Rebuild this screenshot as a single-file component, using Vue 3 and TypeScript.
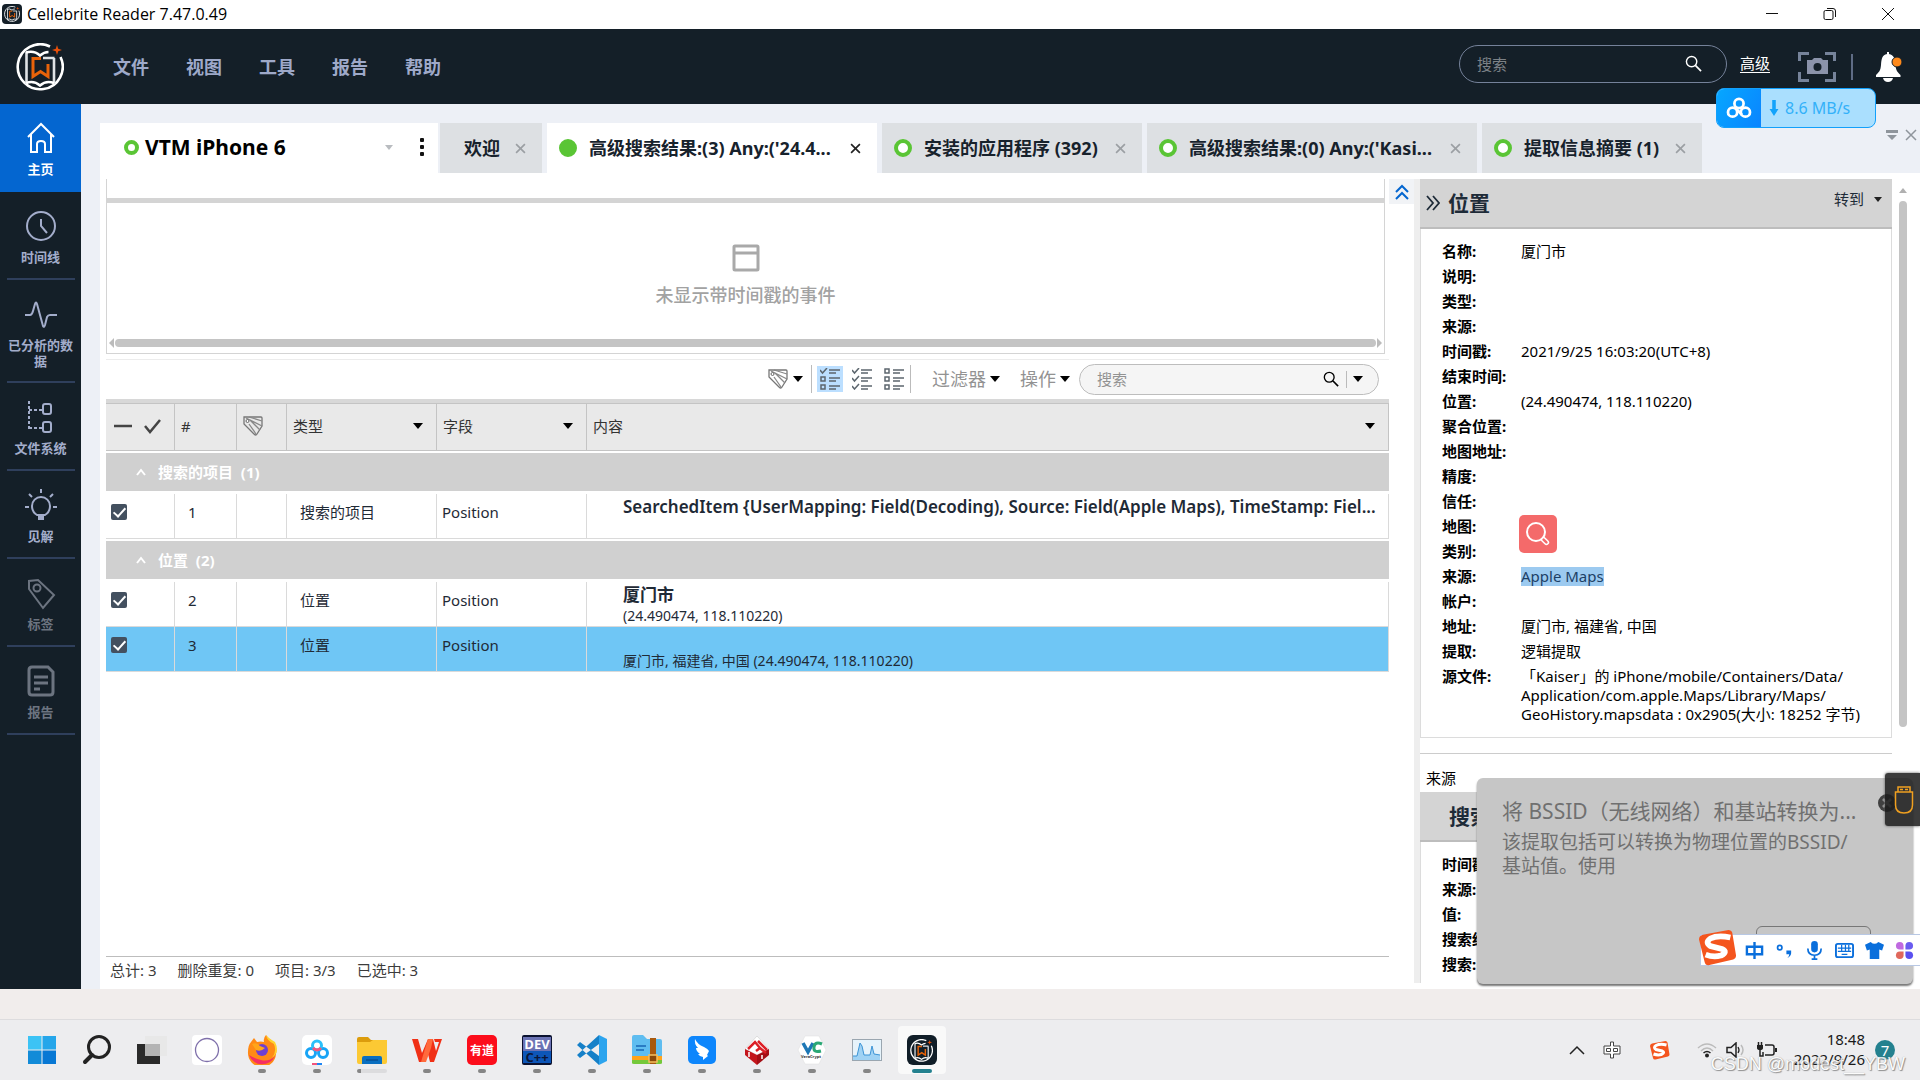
<script setup lang="ts">
import { ref } from 'vue'

interface NavItem { id: string; label: string; dim?: boolean; active?: boolean }
interface Tab { title: string; dot: 'none' | 'full' | 'ring'; active?: boolean; size: string }
interface Row { n: number; type: string; field: string; title: string; sub: string; selected?: boolean; checked: boolean }
interface Group { name: string; count: number; rows: Row[] }
interface Field { label: string; value?: string; kind?: 'map' | 'mark' | 'file' }

const menus = ['文件', '视图', '工具', '报告', '帮助']

const nav: NavItem[] = [
  { id: 'home', label: '主页', active: true },
  { id: 'time', label: '时间线' },
  { id: 'data', label: '已分析的数据' },
  { id: 'files', label: '文件系统' },
  { id: 'idea', label: '见解' },
  { id: 'tag', label: '标签', dim: true },
  { id: 'report', label: '报告', dim: true },
]

const tabs: Tab[] = [
  { title: '欢迎', dot: 'none', size: 'w-welcome' },
  { title: "高级搜索结果:(3) Any:('24.4...", dot: 'full', active: true, size: 'w-search' },
  { title: '安装的应用程序 (392)', dot: 'ring', size: 'w-apps' },
  { title: "高级搜索结果:(0) Any:('Kasi...", dot: 'ring', size: 'w-search' },
  { title: '提取信息摘要 (1)', dot: 'ring', size: 'w-summary' },
]

const groups = ref<Group[]>([
  {
    name: '搜索的项目', count: 1, rows: [
      { n: 1, type: '搜索的项目', field: 'Position', title: 'SearchedItem {UserMapping: Field(Decoding), Source: Field(Apple Maps), TimeStamp: Fiel...', sub: '', checked: true },
    ],
  },
  {
    name: '位置', count: 2, rows: [
      { n: 2, type: '位置', field: 'Position', title: '厦门市', sub: '(24.490474, 118.110220)', checked: true },
      { n: 3, type: '位置', field: 'Position', title: '', sub: '厦门市, 福建省, 中国 (24.490474, 118.110220)', selected: true, checked: true },
    ],
  },
])

const fields: Field[] = [
  { label: '名称', value: '厦门市' },
  { label: '说明' },
  { label: '类型' },
  { label: '来源' },
  { label: '时间戳', value: '2021/9/25 16:03:20(UTC+8)' },
  { label: '结束时间' },
  { label: '位置', value: '(24.490474, 118.110220)' },
  { label: '聚合位置' },
  { label: '地图地址' },
  { label: '精度' },
  { label: '信任' },
  { label: '地图', kind: 'map' },
  { label: '类别' },
  { label: '来源', value: 'Apple Maps', kind: 'mark' },
  { label: '帐户' },
  { label: '地址', value: '厦门市, 福建省, 中国' },
  { label: '提取', value: '逻辑提取' },
  { label: '源文件', value: '「Kaiser」的 iPhone/mobile/Containers/Data/\nApplication/com.apple.Maps/Library/Maps/\nGeoHistory.mapsdata : 0x2905(大小: 18252 字节)', kind: 'file' },
]

const sourceFields = ['时间戳', '来源', '值', '搜索结果', '搜索']

const stats = ['总计: 3', '删除重复: 0', '项目: 3/3', '已选中: 3']

const apps = [
  { id: 'start', run: '' }, { id: 'search', run: '' }, { id: 'tasks', run: '' }, { id: 'ring', run: '' },
  { id: 'firefox', run: 'dot' }, { id: 'netdisk', run: 'dot' }, { id: 'folder', run: 'bar' }, { id: 'wps', run: 'dot' },
  { id: 'youdao', run: 'dot' }, { id: 'dev', run: 'dot' }, { id: 'vscode', run: 'dot' }, { id: 'zip', run: 'dot' },
  { id: 'wing', run: 'dot' }, { id: 'cube', run: 'dot' }, { id: 'vera', run: 'dot' }, { id: 'monitor', run: 'dot' },
  { id: 'reader', run: 'on' },
]
</script>

<template>
  <div class="desktop">
    <svg class="defs" aria-hidden="true">
      <symbol id="logo" viewBox="0 0 48 48">
        <path d="M34 3.500A22.500 22.500 0 1 0 44.500 14" fill="none" stroke="#fff" stroke-width="2.600" />
        <path d="M10.500 9v32M38 15v26M27 15h11.500" fill="none" stroke="#dfe3e6" stroke-width="2.600" />
        <path d="M10 9.500q8-2.500 14 3q4-3.500 8.500-3.500M10 40q8-3 14 2.500q6-5.500 14-2.500" fill="none" stroke="#fff" stroke-width="2.600" />
        <path d="M25 15.500h-8v18l7.500-5l7.500 5V21" fill="none" stroke="#e8630a" stroke-width="3" />
        <path d="M41 2l1.200 3.800L46 7l-3.800 1.200L41 12l-1.200-3.800L36 7l3.800-1.200z" fill="#e8500a" />
      </symbol>
      <symbol id="glass" viewBox="0 0 18 18">
        <circle cx="7" cy="7" r="5.500" fill="none" stroke="currentColor" stroke-width="1.500" />
        <path d="M11 11l6 6" stroke="currentColor" stroke-width="1.800" />
      </symbol>
      <symbol id="tags" viewBox="0 0 20 20">
        <path d="M1 1h17q1 0 1 1v8l-5 8q-1 2-3 0L1 8z" fill="none" stroke="#777" stroke-width="1.300" />
        <path d="M3 2l16 8M6 1l13 4M7 4l10 10M6 8l7 10" fill="none" stroke="#888" stroke-width="1.300" />
        <circle cx="4.500" cy="5" r="1.500" fill="#fff" stroke="#666" />
      </symbol>
      <symbol id="cloud3" viewBox="0 0 28 24">
        <g fill="none" stroke="currentColor" stroke-width="3">
          <circle cx="14" cy="7" r="5" /><circle cx="7" cy="16.500" r="5" /><circle cx="21" cy="16.500" r="5" />
          <path d="M10 12l7 7" />
        </g>
      </symbol>
      <symbol id="sogou" viewBox="0 0 40 38">
        <path d="M4 5L31 0q3 0 4 3l4 24q0 3-3 4L11 37q-4 1-5-3L0 10q0-4 4-5z" fill="#f4551e" />
        <path d="M33 8q-13-3-21 1q-6 4 0 8l12 3q7 3-1 7q-8 2-16-1" fill="none" stroke="#fff" stroke-width="6" />
      </symbol>
      <symbol id="expand" viewBox="0 0 14 16">
        <path d="M1 1l6 7l-6 7M7 1l6 7l-6 7" fill="none" stroke="currentColor" stroke-width="1.800" />
      </symbol>
    </svg>

    <header class="titlebar">
      <span class="tile small"><svg><use href="#logo" /></svg></span>
      <span class="title">Cellebrite Reader 7.47.0.49</span>
      <div class="window-buttons">
        <button aria-label="最小化"><svg viewBox="0 0 14 14"><path d="M1 6.500h12" /></svg></button>
        <button aria-label="还原"><svg viewBox="0 0 14 14"><rect x="1" y="3.500" width="9" height="9" rx="1.500" /><path d="M4 1.500h6q2.500 0 2.500 2.500v6" /></svg></button>
        <button aria-label="关闭"><svg viewBox="0 0 14 14"><path d="M1 1l12 12M13 1L1 13" /></svg></button>
      </div>
    </header>

    <div class="menubar">
      <svg class="brand"><use href="#logo" /></svg>
      <nav class="menus"><button v-for="m in menus" :key="m">{{ m }}</button></nav>
      <div class="top-search">
        <input type="text" placeholder="搜索" aria-label="搜索" />
        <svg><use href="#glass" /></svg>
      </div>
      <a class="advanced" href="#">高级</a>
      <button class="shot" aria-label="屏幕截图">
        <svg viewBox="0 0 38 30">
          <path d="M1.500 9V1.500H11M27 1.500h9.500V9M36.500 20v8.500H27M11 28.500H1.500V20" fill="none" stroke="#76839a" stroke-width="3" />
          <path d="M9 8h5l2-2h7l2 2h5v14H9z" fill="#8b93aa" /><circle cx="19.500" cy="15" r="4" fill="#141f28" />
        </svg>
      </button>
      <span class="divider"></span>
      <button class="bell" aria-label="通知">
        <svg viewBox="0 0 28 30">
          <path d="M13 0v4" stroke="#fff" stroke-width="2" />
          <path d="M13 2c6 0 7 5 7.500 11c.5 6 2 7 5 10v2H1v-2c3-3 4.500-4 5-10C6.500 7 7 2 13 2z" fill="#fff" />
          <path d="M8 26h10q-1 4-5 4t-5-4z" fill="#fff" /><circle cx="22" cy="10" r="5" fill="#ff8a1c" stroke="#141f28" />
        </svg>
      </button>
    </div>

    <main class="workspace">
      <nav class="sidebar">
        <button v-for="item in nav" :key="item.id" :class="{ active: item.active, dim: item.dim }">
          <svg viewBox="0 0 34 34">
            <path v-if="item.id === 'home'" d="M4 16L17 3l13 13M7 13v18h6v-8q0-3 4-3t4 3v8h6V13" />
            <template v-else-if="item.id === 'time'"><circle cx="17" cy="17" r="14" /><path d="M17 10v7l6 7" /></template>
            <path v-else-if="item.id === 'data'" d="M1 18h5q2 0 3-4l2-7q1-3 2 0l6 22q1 2 2-1l2-8q1-2 3-2h7" />
            <g v-else-if="item.id === 'files'"><path d="M5 1v28M5 10h14M5 28h14" stroke-dasharray="3 2" /><rect x="19" y="4" width="8" height="10" rx="2" /><rect x="19" y="22" width="8" height="10" rx="2" /></g>
            <g v-else-if="item.id === 'idea'"><path d="M13 27q-5-3-5-9a9 9 0 0 1 18 0q0 6-5 9zM17 1v4M5 6l3 3M29 6l-3 3M1 19h4M29 19h4" /><path d="M14 30h6" stroke-width="4" /></g>
            <g v-else-if="item.id === 'tag'"><path d="M5 13V5l9-1L30 19L19 32z" /><circle cx="13" cy="12" r="3.500" /></g>
            <g v-else><path d="M5 6q0-3 3-3h16l5 5v20q0 3-3 3H8q-3 0-3-3zM10 13h14M10 19h14M10 25h6" stroke-width="3" /></g>
          </svg>
          <span>{{ item.label }}</span>
        </button>
      </nav>

      <section class="content">
        <div class="tabs">
          <div class="device">
            <i class="ring thick"></i><strong>VTM iPhone 6</strong>
            <i class="arrow pale"></i>
            <button class="dots" aria-label="更多"><i></i><i></i><i></i></button>
          </div>
          <div v-for="(t, i) in tabs" :key="i" class="tab" :class="[t.size, { active: t.active }]">
            <i v-if="t.dot !== 'none'" :class="t.dot"></i>
            <span>{{ t.title }}</span>
            <button aria-label="关闭标签页"><svg viewBox="0 0 10 10"><path d="M1 1l8 8M9 1L1 9" /></svg></button>
          </div>
          <div class="tab-tools">
            <button aria-label="标签页列表"><svg viewBox="0 0 12 12"><path d="M0 1h12v3H0zM1 6h10l-5 5z" fill="#8f959c" /></svg></button>
            <button aria-label="全部关闭"><svg viewBox="0 0 12 12"><path d="M1 1l10 10M11 1L1 11" stroke="#8f959c" stroke-width="1.500" /></svg></button>
          </div>
        </div>

        <div class="panes">
          <section class="results">
            <div class="timeline">
              <div class="bar"></div>
              <div class="empty">
                <svg viewBox="0 0 28 28"><rect x="2" y="2" width="24" height="24" rx="1" /><path d="M2 9h24" /></svg>
                <p>未显示带时间戳的事件</p>
              </div>
              <div class="hscroll"><b></b><span></span><b class="r"></b></div>
            </div>

            <div class="toolbar">
              <button class="tagger" aria-label="标签"><svg><use href="#tags" /></svg><i class="arrow"></i></button>
              <span class="sep"></span>
              <button v-for="k in 3" :key="k" class="mode" :class="{ on: k === 1 }" aria-label="选择模式">
                <svg viewBox="0 0 20 22">
                  <path d="M9 2h11M9 5h7M9 10h11M9 13h7M9 18h11M9 21h7" />
                  <g v-for="r in 3" :key="r" :transform="`translate(0 ${(r - 1) * 8})`">
                    <path v-if="k === 2 || (k === 1 && r === 1)" d="M0 2l2.500 3L7 0" />
                    <rect v-else x="1" y="1" width="4" height="4" />
                  </g>
                </svg>
              </button>
              <span class="sep"></span>
              <button class="drop">过滤器<i class="arrow"></i></button>
              <button class="drop">操作<i class="arrow"></i></button>
              <div class="table-search">
                <input type="text" placeholder="搜索" aria-label="在结果中搜索" />
                <svg><use href="#glass" /></svg><span></span><i class="arrow"></i>
              </div>
            </div>

            <table>
              <colgroup><col class="c1" /><col class="c2" /><col class="c3" /><col class="c4" /><col class="c4" /><col /></colgroup>
              <thead>
                <tr>
                  <th><svg class="marks" viewBox="0 0 50 20"><path d="M2 10h18" /><path d="M33 10l5 6L48 4" /></svg></th>
                  <th>#</th>
                  <th><svg class="tag-icon"><use href="#tags" /></svg></th>
                  <th><div>类型<i class="arrow"></i></div></th>
                  <th><div>字段<i class="arrow"></i></div></th>
                  <th><div>内容<i class="arrow last"></i></div></th>
                </tr>
              </thead>
              <tbody v-for="g in groups" :key="g.name">
                <tr class="group">
                  <td colspan="6"><div><svg viewBox="0 0 10 8"><path d="M1 7l4-5l4 5" /></svg>{{ g.name }}&nbsp; ({{ g.count }})</div></td>
                </tr>
                <tr v-for="r in g.rows" :key="r.n" class="row" :class="{ selected: r.selected }">
                  <td><input v-model="r.checked" type="checkbox" :aria-label="`选择 ${r.n}`" /></td>
                  <td>{{ r.n }}</td>
                  <td></td>
                  <td>{{ r.type }}</td>
                  <td>{{ r.field }}</td>
                  <td><p class="head">{{ r.title }}</p><p class="sub">{{ r.sub }}</p></td>
                </tr>
              </tbody>
            </table>

            <footer class="status"><span v-for="s in stats" :key="s">{{ s }}</span></footer>
          </section>

          <div class="gutter">
            <button aria-label="折叠时间线"><svg viewBox="0 0 14 16"><path d="M1 8l6-6l6 6M1 15l6-6l6 6" /></svg></button>
            <div class="splitter"></div>
          </div>

          <aside class="details">
            <div class="cards">
              <section class="card">
                <header><svg class="expand"><use href="#expand" /></svg><h2>位置</h2><button>转到<i class="arrow"></i></button></header>
                <dl>
                  <div v-for="(f, i) in fields" :key="i">
                    <dt>{{ f.label }}:</dt>
                    <dd :class="f.kind">
                      <svg v-if="f.kind === 'map'" viewBox="0 0 38 38">
                        <rect width="38" height="38" rx="5" fill="#f46a6a" />
                        <circle cx="17" cy="17" r="9" fill="none" stroke="#fff" stroke-width="2" />
                        <rect x="22" y="24" width="8" height="4" rx="2" transform="rotate(45 26 26)" fill="#f46a6a" stroke="#fff" stroke-width="1.500" />
                      </svg>
                      <mark v-else-if="f.kind === 'mark'">{{ f.value }}</mark>
                      <template v-else>{{ f.value }}</template>
                    </dd>
                  </div>
                </dl>
              </section>
              <h3>来源</h3>
              <section class="card second">
                <header><h2>搜索的项目</h2></header>
                <dl><div v-for="s in sourceFields" :key="s"><dt>{{ s }}:</dt></div></dl>
              </section>
            </div>
            <div class="vscroll"><b></b><span></span></div>
          </aside>
        </div>
      </section>
    </main>

    <div class="band"></div>

    <footer class="taskbar">
      <button v-for="a in apps" :key="a.id" class="app" :class="{ current: a.run === 'on' }" :aria-label="a.id">
        <svg viewBox="0 0 30 30">
          <g v-if="a.id === 'start'"><path d="M1 1h13.500v13.500H1z" fill="#3cc3f5" /><path d="M15.500 1H29v13.500H15.500z" fill="#25a6ea" /><path d="M1 15.500h13.500V29H1z" fill="#128bd8" /><path d="M15.500 15.500H29V29H15.500z" fill="#0878d4" /></g>
          <g v-else-if="a.id === 'search'" fill="none" stroke="#222"><circle cx="17" cy="12" r="10.500" stroke-width="3" /><path d="M10 20l-7 7" stroke-width="4" stroke-linecap="round" /></g>
          <g v-else-if="a.id === 'tasks'"><path d="M0 9h23v20H0z" fill="#2a2a2a" /><path d="M8 1h22v20H8z" fill="#e6e6e6" fill-opacity=".8" /><path d="M8 9h15v12H8z" fill="#b4b4b4" /></g>
          <g v-else-if="a.id === 'ring'"><rect width="30" height="30" rx="4" fill="#fff" /><circle cx="15" cy="15" r="11.500" fill="none" stroke="#7f70ab" stroke-width="1.300" /></g>
          <g v-else-if="a.id === 'firefox'"><path d="M4 7l3-4l3 4q4-1 7 0q-1-4 2-7q2 3 6 6q6 6 4 13a14 14 0 0 1-28-2q0-7 3-10z" fill="#ff8a16" /><path d="M19 0q1 6 8 9q3 8-2 14q8-6 3-16q-7-4-9-7z" fill="#ffd42e" /><path d="M2 20a14 14 0 0 0 26 1q-6 6-14 4t-12-5z" fill="#f52f62" /><circle cx="15" cy="15" r="6" fill="#6f3fd0" /><path d="M5 9q5-2 8 2l5 2q-4 4-9 2z" fill="#ffa51a" /></g>
          <g v-else-if="a.id === 'netdisk'"><rect width="30" height="30" rx="5" fill="#fff" /><g fill="none" stroke-width="3"><circle cx="9" cy="18" r="4.500" stroke="#18a4f6" /><circle cx="21" cy="18" r="4.500" stroke="#18a4f6" /><circle cx="15" cy="10.500" r="4.500" stroke="#2bc0fa" /><path d="M11 13q4 4 8 0" stroke="#f2557c" /></g><path d="M10 28h5v2h-5z" fill="#f2557c" /><path d="M15 28h5v2h-5z" fill="#1d86f5" /></g>
          <g v-else-if="a.id === 'folder'"><path d="M0 4q0-2 2-2h9l3 3h16v8H0z" fill="#dc9c0c" /><path d="M0 7h13l3-2h14v22q0 2-2 2H2q-2 0-2-2z" fill="#fcc934" /><path d="M5 29v-6q0-2 2-2h16q2 0 2 2v6z" fill="#0a6fc0" /><path d="M9 25h12" stroke="#06407c" /></g>
          <g v-else-if="a.id === 'wps'"><path d="M0 4h6l4 14l6-14h5l3 12l3-9h-4l-1-3h8l-8 23h-4l-3-12l-5 12H7z" fill="#f03016" /><path d="M16 4h5l-2 9l-5 14H9z" fill="#ff6a3c" /></g>
          <g v-else-if="a.id === 'youdao'"><rect width="30" height="30" rx="5" fill="#fc0d1b" /><text x="15" y="20" class="g-yd">有道</text></g>
          <g v-else-if="a.id === 'dev'"><rect width="30" height="30" rx="2" fill="#0b1230" /><path d="M1 2h28v14H1z" fill="#6b73b4" /><path d="M1 16h28v12H1z" fill="#0d56b8" /><text x="15" y="14" class="g-dev">DEV</text><text x="15" y="27" class="g-cpp">C++</text></g>
          <g v-else-if="a.id === 'vscode'"><path d="M22 0l8 4v22l-8 4z" fill="#2ca4ee" /><path d="M22 0L0 20l3 3L22 9zM22 30L0 10l3-3l19 14z" fill="#1580c8" /></g>
          <g v-else-if="a.id === 'zip'"><path d="M0 2q0-2 2-2h9l4 4h13q2 0 2 2v20H0z" fill="#5fbdf0" /><path d="M0 21h30v4H0z" fill="#ffa41c" /><path d="M0 25h30v3q0 1-2 1H2q-2 0-2-1z" fill="#74c83a" /><path d="M4 11h10M4 15h8" stroke="#2a7cc4" stroke-width="2" /><path d="M18 3h6v26h-6z" fill="#a8590e" /><rect x="17" y="20" width="8" height="7" fill="#8a4808" stroke="#f4c060" stroke-width="1.500" /></g>
          <g v-else-if="a.id === 'wing'"><rect x="1" y="1" width="28" height="28" rx="5" fill="#0d86fc" /><path d="M8 4q2 5 9 8q4 2 5 4l-2 4l1 1l-5 4v-3q-3 0-5-3h2q-4-3-4-6h2q-4-4-3-9z" fill="#fff" /></g>
          <g v-else-if="a.id === 'cube'"><path d="M15 1l12 13l-12 6L3 14z" fill="#fff" stroke="#ddd" /><path d="M3 14l12 6v10L3 20z" fill="#c4161c" /><path d="M27 14l-12 6v10l12-10z" fill="#a40f16" /><path d="M6 14l7-7l5 6l-4 3M16 6l9 9M18 13l6 5" fill="none" stroke="#dc1f26" stroke-width="2.500" /><path d="M7 17v5M20 20v4" stroke="#fff" stroke-width="1.500" /></g>
          <g v-else-if="a.id === 'vera'"><path d="M8 1h14l7 14l-7 14H8L1 15z" fill="#fff" stroke="#ddd" stroke-width=".5" /><path d="M6 8l5 9l5-9" fill="none" stroke="#1d77b5" stroke-width="3.500" /><path d="M25 9q-7-3-8 3t7 4" fill="none" stroke="#2aa875" stroke-width="3" /><text x="14" y="23" class="g-vc">VeraCrypt</text></g>
          <g v-else-if="a.id === 'monitor'"><rect x=".5" y="4.500" width="29" height="21" fill="#e6f3fb" stroke="#9aa6b0" /><path d="M1 25v-4h4L8 8l2 3l2 9h6l2-9l2 8l6 1v5z" fill="#9fd2f4" /><path d="M1 21h4L8 8l2 3l2 9h6l2-9l2 8l6 1" fill="none" stroke="#3c94d6" /></g>
          <g v-else><rect width="30" height="30" rx="6" fill="#111e28" /><use href="#logo" x="3" y="4" width="23" height="23" /></g>
        </svg>
        <i v-if="a.run" :class="a.run"></i>
      </button>

      <div class="tray">
        <button aria-label="显示隐藏的图标"><svg class="chev" viewBox="0 0 16 10"><path d="M1 9l7-7l7 7" fill="none" stroke="#222" stroke-width="1.500" /></svg></button>
        <svg class="zh" viewBox="0 0 18 18"><path d="M7.500 1h3v4h6.500v8h-6.500v4h-3v-4H1V5h6.500zM3.500 7.500h4v3h-4zM10.500 7.500h4v3h-4z" fill="#fff" stroke="#444" /></svg>
        <svg class="so"><use href="#sogou" /></svg>
        <svg class="wifi" viewBox="0 0 20 16"><path d="M1 6q9-8 18 0M4 9q6-6 12 0" fill="none" stroke="#bbb" stroke-width="1.500" /><path d="M6.500 11q3.500-3 7 0" fill="none" stroke="#222" stroke-width="1.500" /><circle cx="10" cy="13.500" r="2" fill="#222" /></svg>
        <svg class="vol" viewBox="0 0 20 16"><path d="M1 5.500h4l5-4.500v14l-5-4.500H1z" fill="none" stroke="#222" stroke-width="1.500" /><path d="M12 5q2 3 0 6" fill="none" stroke="#222" stroke-width="1.300" /><path d="M15 3q4 5 0 10" fill="none" stroke="#bbb" stroke-width="1.500" /></svg>
        <svg class="batt" viewBox="0 0 20 16"><path d="M0 3h6v3q0 2-3 2T0 6z" fill="#222" /><path d="M1.500 0v3M4.500 0v3M3 8v6h3v-4" fill="none" stroke="#222" stroke-width="1.500" /><path d="M8 3h7q2 0 2 2v6q0 2-2 2H8" fill="none" stroke="#222" stroke-width="1.500" /><path d="M18 6h2v4h-2z" fill="#222" /></svg>
        <time>18:48<br />2022/9/26</time>
        <span class="count">7</span>
      </div>
      <span class="watermark">CSDN @modest__YBW</span>
    </footer>

    <div class="speed">
      <span><svg><use href="#cloud3" /></svg></span>
      <svg class="down" viewBox="0 0 10 18"><path d="M3 0h4v10h3l-5 8l-5-8h3z" fill="#13a3fb" /></svg>8.6 MB/s
    </div>

    <section class="toast">
      <h4>将 BSSID（无线网络）和基站转换为...</h4>
      <p>该提取包括可以转换为物理位置的BSSID/<br />基站值。使用</p>
      <div class="toast-button"></div>
    </section>
    <button class="toast-close" aria-label="关闭通知"><svg viewBox="0 0 18 18"><circle cx="9" cy="9" r="9" fill="#404040" /><path d="M5 5l8 8M13 5l-8 8" stroke="#999" stroke-width="2.500" /></svg></button>
    <div class="usb"><svg viewBox="0 0 20 30"><path d="M4 7V2h12v5M1.500 7h17v13q0 8-8.500 8t-8.500-8zM6 4.500h3M11 4.500h3" fill="none" stroke="#f0a020" stroke-width="1.500" /></svg></div>

    <div class="ime">
      <svg class="s"><use href="#sogou" /></svg>
      <svg viewBox="0 0 20 20"><path d="M2 6h16v8H2zM10 1v18" fill="none" stroke="#0a6fdc" stroke-width="2.500" /></svg>
      <svg viewBox="0 0 20 20"><circle cx="5" cy="7" r="2.300" fill="none" stroke="#0a6fdc" stroke-width="1.800" /><path d="M12 10h5v3q0 3-4 5q2-2 2-4h-3z" fill="#0a6fdc" /></svg>
      <svg viewBox="0 0 20 20"><rect x="6.500" y="0" width="7" height="12" rx="3.500" fill="#0a6fdc" /><path d="M3 8q0 7 7 7t7-7M10 15v4M7 19h6" fill="none" stroke="#0a6fdc" stroke-width="1.800" /></svg>
      <svg viewBox="0 0 20 20"><rect x="1" y="3" width="18" height="14" rx="2" fill="none" stroke="#0a6fdc" stroke-width="2" /><path d="M3 7.500h14M3 11h14M7 14h6M7 4v7M11 4v7M14.500 4v7" stroke="#0a6fdc" stroke-width="1.300" /></svg>
      <svg viewBox="0 0 20 20"><path d="M0 4l6-3q4 4 8 0l6 3l-2 6l-3-1v10H5V9L2 10z" fill="#0a6fdc" /></svg>
      <svg viewBox="0 0 20 20"><path d="M1 5a4 4 0 0 1 8 0v4H5a4 4 0 0 1-4-4z" fill="#c06ae0" /><path d="M11 5a4 4 0 1 1 4 4h-4z" fill="#6a5cf0" /><path d="M1 15a4 4 0 0 1 4-4h4v4a4 4 0 0 1-8 0z" fill="#e0685c" /><path d="M11 11h4a4 4 0 1 1-4 4z" fill="#5a50f0" /></svg>
    </div>
  </div>
</template>

<style>
body { margin: 0; overflow: hidden; }
</style>

<style scoped>
* { box-sizing: border-box; }
.desktop {
  position: relative; display: flex; flex-direction: column; height: 100vh; overflow: hidden;
  font-family: "Noto Sans", "Noto Sans CJK SC", sans-serif; font-size: 15px; line-height: 20px; color: #000; background: #fff;
}
button { padding: 0; border: 0; background: none; font: inherit; color: inherit; cursor: pointer; }
input { font: inherit; }
svg { display: block; flex: none; }
h2, h3, h4, p, dl, dd { margin: 0; }
.defs { position: absolute; width: 0; height: 0; }
.arrow { width: 0; height: 0; border: 5px solid transparent; border-top: 6px solid #000; border-bottom: 0; }

.titlebar { display: flex; align-items: center; height: 29px; padding: 0 0 1px 2px; background: #fff; flex: none; }
.tile { display: grid; place-items: center; width: 20px; height: 20px; border-radius: 4px; background: #141f28; }
.tile svg { width: 16px; height: 16px; }
.title { flex: 1; margin-left: 5px; font-family: "Open Sans", sans-serif; font-size: 16px; }
.window-buttons { display: flex; gap: 44px; padding-right: 25px; }
.window-buttons svg { width: 14px; height: 14px; fill: none; stroke: #111; }

.menubar { display: flex; align-items: center; height: 75px; padding: 0 17px 0 16px; background: #141f28; flex: none; }
.brand { width: 48px; height: 48px; }
.menus { display: flex; gap: 37px; flex: 1; margin-left: 49px; font-size: 18px; line-height: 24px; font-weight: 700; color: #9ea9c9; }
.top-search { display: flex; align-items: center; width: 268px; height: 38px; padding: 0 24px 0 17px; margin-bottom: 6px; border: 1px solid #75829a; border-radius: 19px; color: #fff; }
.top-search input { flex: 1; min-width: 0; padding: 0; border: 0; outline: 0; background: none; color: #fff; }
.top-search input::placeholder { color: #7c8287; }
.top-search svg { width: 17px; height: 17px; }
.advanced { margin: 0 28px 8px 13px; color: #fff; text-underline-offset: 3px; }
.shot svg { width: 38px; height: 30px; }
.divider { width: 2px; height: 26px; margin: 0 22px 0 15px; background: #5f6c85; }
.bell svg { width: 28px; height: 30px; }

.workspace { display: flex; flex: 1; min-height: 0; }
.sidebar { display: flex; flex-direction: column; align-items: center; width: 81px; flex: none; background: #141f28; }
.sidebar button { width: 68px; padding: 17px 0 13px; border-bottom: 2px solid #2f3f5c; font-size: 13px; line-height: 16px; font-weight: 700; color: #a3adcb; }
.sidebar button:nth-child(3) { padding-bottom: 12px; }
.sidebar button.active { width: 100%; border-color: #0466d0; background: #0466d0; color: #fff; }
.sidebar button.dim { color: #6c7480; }
.sidebar svg { width: 34px; height: 34px; margin: 0 auto 6px; fill: none; stroke: currentColor; stroke-width: 2; }

.content { display: flex; flex-direction: column; flex: 1; min-width: 0; background: #edf0f6; padding-left: 19px; }
.tabs { display: flex; height: 50px; margin-top: 19px; flex: none; }
.device { display: flex; align-items: center; width: 338px; margin-right: 2px; padding: 0 14px 2px 24px; background: #fff; }
.device strong { flex: 1; margin-left: 6px; font-size: 21px; line-height: 28px; font-family: "Noto Sans", sans-serif; }
.ring, .full { width: 18px; height: 18px; border: 4px solid #5ac535; border-radius: 50%; background: #fff; flex: none; }
.full { background: #5ac535; }
.thick { width: 15px; height: 15px; }
.arrow.pale { border-width: 4px; border-top: 5px solid #b9bcc0; border-bottom: 0; margin-right: 27px; }
.dots { display: flex; flex-direction: column; gap: 3px; }
.dots i { width: 4px; height: 4px; background: #111; border-radius: 1px; }
.tab { display: flex; align-items: center; margin-right: 5px; padding: 0 16px 0 12px; gap: 12px; background: #dde0e3; font-size: 18px; line-height: 26px; font-weight: 700; color: #17222c; }
.tab.active { background: #fff; }
.tab span { flex: 1; white-space: nowrap; }
.tab svg { width: 11px; height: 11px; stroke: #9b9fa3; stroke-width: 1.500; }
.tab.active svg { stroke: #222; }
.w-welcome { width: 102px; padding-left: 24px; }
.w-search { width: 330px; }
.w-apps { width: 260px; }
.w-summary { width: 220px; }
.tab-tools { display: flex; gap: 7px; margin-left: auto; padding: 6px 3px 0 0; align-self: flex-start; }
.tab-tools svg { width: 12px; height: 12px; }

.panes { display: flex; flex: 1; min-height: 0; padding: 6px 0 0 6px; background: #fff; }
.results { display: flex; flex-direction: column; flex: 1; min-width: 0; }
.timeline { display: flex; flex-direction: column; height: 175px; margin: 0 4px 5px 0; padding-top: 19px; border: 1px solid #d4d4d4; border-top: 0; flex: none; }
.bar { height: 5px; background: #d4d4d4; }
.empty { flex: 1; display: flex; flex-direction: column; align-items: center; padding-top: 41px; gap: 11px; font-size: 18px; line-height: 24px; font-weight: 500; color: #a2a2a2; }
.empty svg { width: 28px; height: 28px; fill: none; stroke: #a9a9a9; stroke-width: 3; }
.hscroll { display: flex; align-items: center; height: 10px; margin: 0 2px 5px; gap: 1px; }
.hscroll span { flex: 1; height: 8px; border-radius: 4px; background: #c4c4c4; }
.hscroll b { border: 5px solid transparent; border-left: 0; border-right-color: #bbb; }
.hscroll b.r { border: 5px solid transparent; border-right: 0; border-left-color: #bbb; }
.toolbar { display: flex; align-items: center; justify-content: flex-end; height: 40px; padding: 0 10px 1px 0; border-top: 1px solid #ececec; flex: none; }
.tagger { display: flex; align-items: center; gap: 5px; margin-right: 5px; }
.tagger svg { width: 20px; height: 20px; }
.sep { width: 1px; height: 28px; margin: 0 5px 0 3px; background: #bbb; }
.mode { padding: 2px 3px; margin-right: 6px; }
.mode:nth-of-type(4) { margin-right: 0; }
.mode.on { background: #bcdfff; }
.mode svg { width: 20px; height: 22px; fill: none; stroke: #5c666e; stroke-width: 1.500; }
.drop { display: flex; align-items: center; gap: 4px; margin-left: 16px; font-size: 18px; line-height: 24px; color: #929292; }
.drop + .drop { margin-left: 20px; }
.table-search { display: flex; align-items: center; width: 300px; height: 31px; margin-left: 9px; padding: 0 15px 0 17px; border: 1px solid #bdbdbd; border-radius: 16px; background: #f5f5f5; }
.table-search input { flex: 1; min-width: 0; padding: 0; border: 0; outline: 0; background: none; }
.table-search input::placeholder { color: #929292; }
.table-search svg { width: 16px; height: 16px; }
.table-search span { width: 1px; height: 17px; margin: 0 6px 0 7px; background: #bbb; }

table { width: 100%; table-layout: fixed; border-collapse: separate; border-spacing: 0; border-top: 4px solid #d8d8d8; }
.c1 { width: 69px; } .c2 { width: 62px; } .c3 { width: 50px; } .c4 { width: 150px; }
th { height: 48px; padding: 0 0 2px 6px; border: solid #c4c4c4; border-width: 1px 1px 1px 0; background: #e9e9e9; text-align: left; font-weight: 400; color: #333; }
th div { display: flex; align-items: center; justify-content: space-between; padding-right: 13px; }
.marks { width: 50px; height: 20px; fill: none; stroke: #444; stroke-width: 2.500; }
.tag-icon { width: 20px; height: 20px; }
td { padding: 0; }
.group td { border: solid #fff; border-width: 2px 0 3px; background: #d0d0d0; }
.group div { display: flex; align-items: center; height: 38px; padding-left: 30px; color: #fff; font-weight: 700; }
.group svg { width: 10px; height: 8px; margin-right: 12px; fill: none; stroke: #fff; stroke-width: 2; }
.row td { height: 45px; padding: 0 0 8px 5px; border: solid #dadada; border-width: 0 1px 1px 0; color: #1f2a36; }
.row td:nth-child(2), .row td:nth-child(4) { padding-left: 13px; }
.row td:last-child { padding: 1px 0 0 36px; vertical-align: top; }
.selected td { background: #6fc6f5; }
.row input { appearance: none; display: block; width: 16px; height: 16px; margin: 0; border-radius: 2px; background: #43505f; }
.row input:checked::after { content: ""; display: block; width: 5px; height: 10px; margin: 1px 0 0 5px; border: solid #fff; border-width: 0 2px 2px 0; transform: rotate(42deg); }
.head { height: 23px; font-size: 17px; line-height: 24px; font-weight: 600; white-space: nowrap; overflow: hidden; }
.sub { font-size: 14px; line-height: 20px; height: 20px; }
.status { display: flex; gap: 21px; margin-top: auto; height: 33px; padding: 3px 4px 0; border-top: 1px solid #bdbdbd; color: #3c3c3c; flex: none; }

.gutter { display: flex; align-items: flex-start; padding-bottom: 6px; }
.gutter button { display: grid; place-items: center; width: 25px; height: 25px; background: #f1f3f6; }
.gutter svg { width: 14px; height: 16px; fill: none; stroke: #0466d0; stroke-width: 2; }
.splitter { width: 6px; align-self: stretch; background: #eee; }

.details { display: flex; width: 500px; padding-bottom: 6px; flex: none; }
.cards { flex: 1; min-width: 0; overflow: hidden; }
.card { border: 1px solid #dcdcdc; border-top: 0; }
.card header { display: flex; align-items: center; height: 50px; margin: 0 -1px; padding: 0 10px 0 6px; border-bottom: 2px solid #bdbdbd; background: #d4d4d4; color: #1e2b38; }
.card h2 { flex: 1; margin-left: 8px; font-size: 21px; line-height: 28px; font-weight: 700; }
.card header button { display: flex; align-items: center; gap: 10px; margin-bottom: 8px; }
.card header .arrow { border-width: 4px; border-top: 5px solid #222; border-bottom: 0; }
.expand { width: 14px; height: 16px; }
.card dl { padding: 10px 0 13px 21px; }
.card dl div { display: flex; align-items: flex-start; min-height: 25px; }
dt { width: 79px; line-height: 25px; font-weight: 700; flex: none; }
dd { line-height: 25px; white-space: pre; }
dd.file { padding-top: 3px; line-height: 19px; }
dd.map { height: 25px; }
dd.map svg { width: 38px; height: 38px; margin: 1px 0 0 -2px; }
mark { display: inline-block; line-height: 19px; background: #9ccaf0; color: #1c3f66; }
.cards h3 { margin-top: 15px; padding: 14px 0 4px 6px; border-top: 1px solid #ccc; font-size: 15px; line-height: 20px; font-weight: 400; }
.second header { padding-left: 21px; }
.vscroll { width: 28px; padding: 9px 0 0 7px; }
.vscroll b { display: block; width: 0; border: 4px solid transparent; border-top: 0; border-bottom: 5px solid #b0b0b0; }
.vscroll span { display: block; width: 8px; height: 526px; margin-top: 8px; border-radius: 4px; background: #c4c4c4; }

.band { height: 31px; background: #f1edec; border-bottom: 1px solid #dddcde; flex: none; }
.taskbar { position: relative; display: flex; align-items: center; height: 60px; padding-left: 18px; background: #ededef; flex: none; }
.app { position: relative; display: grid; place-items: center; width: 48px; height: 48px; margin-right: 7px; border-radius: 4px; }
.app svg { width: 30px; height: 30px; }
.app.current { background: #f9f9f9; }
.app i { position: absolute; bottom: 1px; left: 20px; width: 8px; height: 4px; border-radius: 2px; background: #858585; }
.app i.on { left: 14px; width: 20px; background: #24818f; }
.app i.bar { left: 9px; width: 30px; background: linear-gradient(90deg, #858585 4px, #dcdcde 4px); }
.g-yd { font: 700 12px "Noto Sans CJK SC", sans-serif; fill: #fff; text-anchor: middle; }
.g-dev { font: 700 13px "Open Sans", sans-serif; fill: #fff; text-anchor: middle; }
.g-cpp { font: 700 13px "Open Sans", sans-serif; fill: #0b1638; text-anchor: middle; }
.g-vc { font: 700 4px "Noto Sans", sans-serif; fill: #333; text-anchor: middle; }
.tray { display: flex; align-items: center; margin-left: auto; padding-right: 25px; }
.chev { width: 16px; height: 10px; }
.zh { width: 18px; height: 18px; margin-left: 18px; }
.so { width: 20px; height: 19px; margin-left: 29px; }
.wifi { width: 20px; height: 16px; margin-left: 27px; }
.vol { width: 20px; height: 16px; margin-left: 9px; }
.batt { width: 20px; height: 16px; margin-left: 11px; }
.tray time { width: 88px; padding-bottom: 2px; text-align: right; line-height: 20px; color: #1a1a1a; }
.count { width: 20px; height: 20px; margin-left: 10px; border-radius: 50%; background: #24818f; color: #fff; text-align: center; }
.watermark { position: absolute; right: 15px; bottom: 4px; font: 18px/24px "Liberation Sans", sans-serif; color: #fff; text-shadow: 1px 1px 1px #777, 0 0 1px #888; opacity: .8; }

.speed { position: absolute; top: 88px; right: 44px; display: flex; align-items: center; width: 160px; height: 40px; border: 1px solid #12a0fb; border-radius: 8px; overflow: hidden; background: #aadffe; color: #33b1f9; font-size: 16px; }
.speed span { display: grid; place-items: center; width: 44px; height: 40px; background: linear-gradient(120deg, #06a7ff, #0a84ff); color: #fff; }
.speed span svg { width: 26px; height: 22px; }
.down { width: 10px; height: 16px; margin: 0 6px 0 8px; }
.toast { position: absolute; right: 7px; bottom: 96px; width: 436px; height: 206px; padding: 17px 25px; border-radius: 6px; background: #c6c6c6; box-shadow: 0 2px 2px #777; color: #707070; }
.toast h4 { font-size: 21px; line-height: 32px; font-weight: 400; white-space: nowrap; }
.toast p { margin-top: 3px; font-size: 19px; line-height: 24px; white-space: nowrap; }
.toast-button { position: absolute; right: 42px; bottom: 20px; width: 115px; height: 38px; border: 1px solid #777; border-radius: 6px; }
.toast-close { position: absolute; right: 24px; bottom: 268px; }
.toast-close svg { width: 18px; height: 18px; }
.usb { position: absolute; right: 0; bottom: 254px; display: grid; place-items: center; width: 35px; height: 53px; padding-left: 2px; border-radius: 3px 0 0 3px; background: rgba(28, 28, 28, .86); box-shadow: 0 0 3px #555; }
.usb svg { width: 20px; height: 30px; }
.ime { position: absolute; right: 0; bottom: 114px; display: flex; align-items: center; gap: 11px; width: 220px; height: 32px; border: 1px solid #b8c8e4; border-right: 0; background: #fff; }
.ime svg { width: 19px; height: 19px; }
.ime .s { width: 38px; height: 38px; margin: -4px -3px 0 -2px; }
</style>
